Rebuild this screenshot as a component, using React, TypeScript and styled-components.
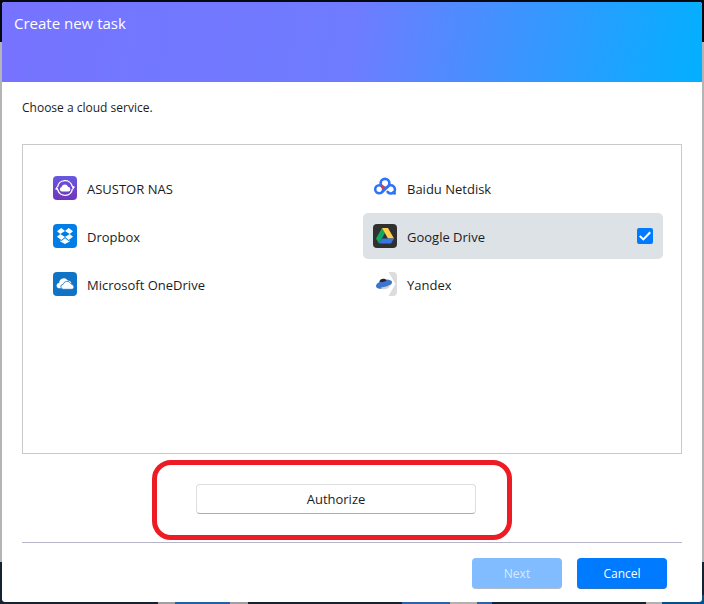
import React, { useState } from "react";
import styled, { createGlobalStyle } from "styled-components";

const GlobalStyle = createGlobalStyle`
  * { box-sizing: border-box; }
  body {
    margin: 0;
    font-family: "Open Sans", "Noto Sans", sans-serif;
    color: #1c1c1c;
  }
`;

const Backdrop = styled.div`
  display: flex;
  flex-direction: column;
  min-height: 100vh;
  padding: 2px;
  background:
    linear-gradient(90deg, transparent 158px, #a0a0a2 158px 175px, #2460a8 175px 230px, #a0a0a2 230px 248px,
      transparent 248px 402px, #3060a8 402px 450px, #b4b0b0 450px 477px, #3060a8 477px 492px,
      transparent 492px 646px, #b4b0b0 646px 662px, #084f88 662px) bottom / 100% 9px no-repeat,
    linear-gradient(#06080f 42px, #b4b4b4 42px 562px, #152232 562px);
`;

const Dialog = styled.main`
  display: flex;
  flex: 1;
  flex-direction: column;
  overflow: hidden;
  border-radius: 3px;
  background: #ffffff;
`;

const Header = styled.header`
  height: 80px;
  padding: 10px 12px;
  background: linear-gradient(100deg, #7673ff 0%, #6f7cff 50%, #02b0ff 100%);
`;

const Title = styled.h1`
  margin: 0;
  color: #ffffff;
  font-size: 15px;
  font-weight: 400;
  line-height: 22px;
`;

const Body = styled.div`
  display: flex;
  flex: 1;
  flex-direction: column;
  padding: 17px 20px 0;
`;

const Prompt = styled.p`
  margin: 0 0 27px;
  font-size: 12px;
  line-height: 18px;
`;

const Services = styled.section`
  display: grid;
  flex: 1;
  grid-template-columns: 1fr 1fr;
  align-content: start;
  gap: 2px 20px;
  padding: 20px 18px 20px 20px;
  border: 1px solid #c9c9c9;
`;

const ServiceRow = styled.label<{ $selected: boolean }>`
  display: flex;
  align-items: center;
  gap: 10px;
  height: 46px;
  padding: 0 10px;
  border-radius: 5px;
  background: ${({ $selected }) => ($selected ? "#dde2e6" : "transparent")};
  font-size: 13px;
  line-height: 20px;
  cursor: pointer;
`;

const ServiceName = styled.span`
  flex: 1;
  padding-top: 2px;
`;

const Tick = styled.input`
  display: grid;
  place-content: center;
  width: 16px;
  height: 16px;
  margin: 0;
  border-radius: 2px;
  appearance: none;

  &:checked {
    background: #007aff;
  }

  &:checked::before {
    content: "";
    width: 12px;
    height: 12px;
    background: #ffffff;
    clip-path: polygon(0 55%, 12% 43%, 36% 66%, 87% 12%, 100% 24%, 36% 90%);
  }
`;

const AuthorizeRow = styled.div`
  display: flex;
  justify-content: center;
  padding: 30px 32px 28px 0;
`;

const AuthorizeArea = styled.div`
  position: relative;
  width: 280px;
`;

const Highlight = styled.div`
  position: absolute;
  inset: -24px -36px -26px -44px;
  border: 5px solid #ed1c24;
  border-radius: 19px;
  pointer-events: none;
`;

const AuthorizeButton = styled.button`
  display: block;
  width: 100%;
  height: 30px;
  padding: 0;
  border: 1px solid #dedede;
  border-bottom-color: #adadad;
  border-radius: 4px;
  background: #ffffff;
  color: inherit;
  font: inherit;
  font-size: 13px;
`;

const Footer = styled.footer`
  display: flex;
  justify-content: flex-end;
  gap: 15px;
  padding: 15px 15px 13px;
  border-top: 1px solid #b5b4c8;
`;

const ActionButton = styled.button`
  width: 90px;
  height: 31px;
  padding: 0;
  border: 0;
  border-bottom: 1px solid #2d73bd;
  border-radius: 4px;
  background: #007aff;
  color: #ffffff;
  font: inherit;
  font-size: 12px;

  &:disabled {
    border-bottom-color: #b0bccb;
    background: #80bcff;
    color: #d8eaff;
  }
`;

const Icon = styled.svg`
  display: block;
  flex: none;
  width: 24px;
  height: 24px;
`;

const AsustorIcon = () => (
  <Icon viewBox="0 0 24 24" aria-hidden="true">
    <defs>
      <linearGradient id="asustor" x2="0" y2="1">
        <stop stopColor="#6958e0" />
        <stop offset="1" stopColor="#7036bb" />
      </linearGradient>
    </defs>
    <rect width="24" height="24" rx="4" fill="url(#asustor)" />
    <path d="M4.6 11A7.5 7.5 0 0 1 19.2 10M19.4 13A7.5 7.5 0 0 1 4.8 14" fill="none" stroke="#fff" strokeWidth="1.4" />
    <path d="m18.4 9.6 3.6 1.2-2 3ZM5.6 14.4 2 13.2l2-3Z" fill="#fff" />
    <path d="M9 15.6a2.4 2.4 0 0 1-.4-4.7 3.5 3.5 0 0 1 6.5-.2 2.5 2.5 0 0 1 .5 4.9Z" fill="#fff" />
  </Icon>
);

const DropboxIcon = () => (
  <Icon viewBox="0 0 24 24" aria-hidden="true">
    <rect width="24" height="24" rx="4" fill="#007ee5" />
    <path
      d="m8.3 4 3.7 3-4.7 3L4 7.2Zm7.4 0L20 7.2 16.7 10 12 7ZM4 12.7 7.3 10l4.7 3-3.7 3Zm12.7-2.7 3.3 2.7-4.3 3.3L12 13ZM8.3 17l3.7-2.8 3.7 2.8 1-.7v1.1L12 20l-4.7-2.6v-1.1Z"
      fill="#fff"
    />
  </Icon>
);

const OneDriveIcon = () => (
  <Icon viewBox="0 0 24 24" aria-hidden="true">
    <rect width="24" height="24" rx="4" fill="#1073c6" />
    <path d="M5.5 16.3a2.7 2.7 0 0 1 .7-5.3 4.6 4.6 0 0 1 8.5-2.6c2 0 3.3 1 3.7 2.8L9 16.3Z" fill="#fff" />
    <path
      d="M10.5 17.3a2.5 2.5 0 0 1-.3-5 4 4 0 0 1 7.4-.8 3 3 0 0 1 2 1.6 2.2 2.2 0 0 1-.4 4.2Z"
      fill="#fff"
      stroke="#1073c6"
      strokeWidth="0.8"
    />
  </Icon>
);

const BaiduIcon = () => (
  <Icon viewBox="0 0 24 24" aria-hidden="true">
    <g fill="none" stroke="#2f73f6" strokeWidth="2.6" strokeLinecap="round">
      <circle cx="12" cy="7.3" r="4.4" />
      <circle cx="6.2" cy="13.2" r="4" />
      <path d="M9.4 15.9 14.6 10.9A4.1 4.1 0 1 1 14.6 15.9" />
      <path d="m20.4 16.4 1.3 1" />
    </g>
    <path d="m8.4 9.6 2.8 2.8" stroke="#dc3b40" strokeWidth="3" />
  </Icon>
);

const GoogleDriveIcon = () => (
  <Icon viewBox="0 0 24 24" aria-hidden="true">
    <rect width="24" height="24" rx="4" fill="#303030" />
    <path d="M9 4 12 9.1 6 19.5 3 14.4Z" fill="#11a861" />
    <path d="M9 4h6l6 10.4h-6Z" fill="#ffd04b" />
    <path d="M9 14.4h12l-3 5.1H6Z" fill="#3777e3" />
  </Icon>
);

const YandexIcon = () => (
  <Icon viewBox="0 0 24 24" aria-hidden="true">
    <path d="M15.5 0H20a4 4 0 0 1 4 4v16a4 4 0 0 1-4 4h-4.5L22.5 12Z" fill="#dcdcdc" />
    <ellipse cx="11" cy="12.2" rx="8.4" ry="4" transform="rotate(-18 11 12.2)" fill="#3d75cc" />
    <path d="M8 15.4c3.8-.2 7-1.2 9.4-2.8-.2 2.6-3 4.7-6.2 4.7-1.5 0-2.6-.7-3.2-1.9Z" fill="#d7d2cb" />
    <path d="M6.3 9.7C6.800 7.900 8.300 6.800 10.200 6.800c1.700 0 2.900.6 3.300 1.700-1.600 1.300-4.600 2-7.200 1.200Z" fill="#20252c" />
  </Icon>
);

const services = [
  { name: "ASUSTOR NAS", Logo: AsustorIcon },
  { name: "Baidu Netdisk", Logo: BaiduIcon },
  { name: "Dropbox", Logo: DropboxIcon },
  { name: "Google Drive", Logo: GoogleDriveIcon },
  { name: "Microsoft OneDrive", Logo: OneDriveIcon },
  { name: "Yandex", Logo: YandexIcon },
];

export default function App() {
  const [selected, setSelected] = useState("Google Drive");

  return (
    <>
      <GlobalStyle />
      <Backdrop>
        <Dialog>
          <Header>
            <Title>Create new task</Title>
          </Header>
          <Body>
            <Prompt>Choose a cloud service.</Prompt>
            <Services aria-label="Cloud services">
              {services.map(({ name, Logo }) => (
                <ServiceRow key={name} $selected={name === selected}>
                  <Logo />
                  <ServiceName>{name}</ServiceName>
                  <Tick type="checkbox" checked={name === selected} onChange={() => setSelected(name)} />
                </ServiceRow>
              ))}
            </Services>
            <AuthorizeRow>
              <AuthorizeArea>
                <AuthorizeButton type="button">Authorize</AuthorizeButton>
                <Highlight />
              </AuthorizeArea>
            </AuthorizeRow>
            <Footer>
              <ActionButton type="button" disabled>
                Next
              </ActionButton>
              <ActionButton type="button">Cancel</ActionButton>
            </Footer>
          </Body>
        </Dialog>
      </Backdrop>
    </>
  );
}
